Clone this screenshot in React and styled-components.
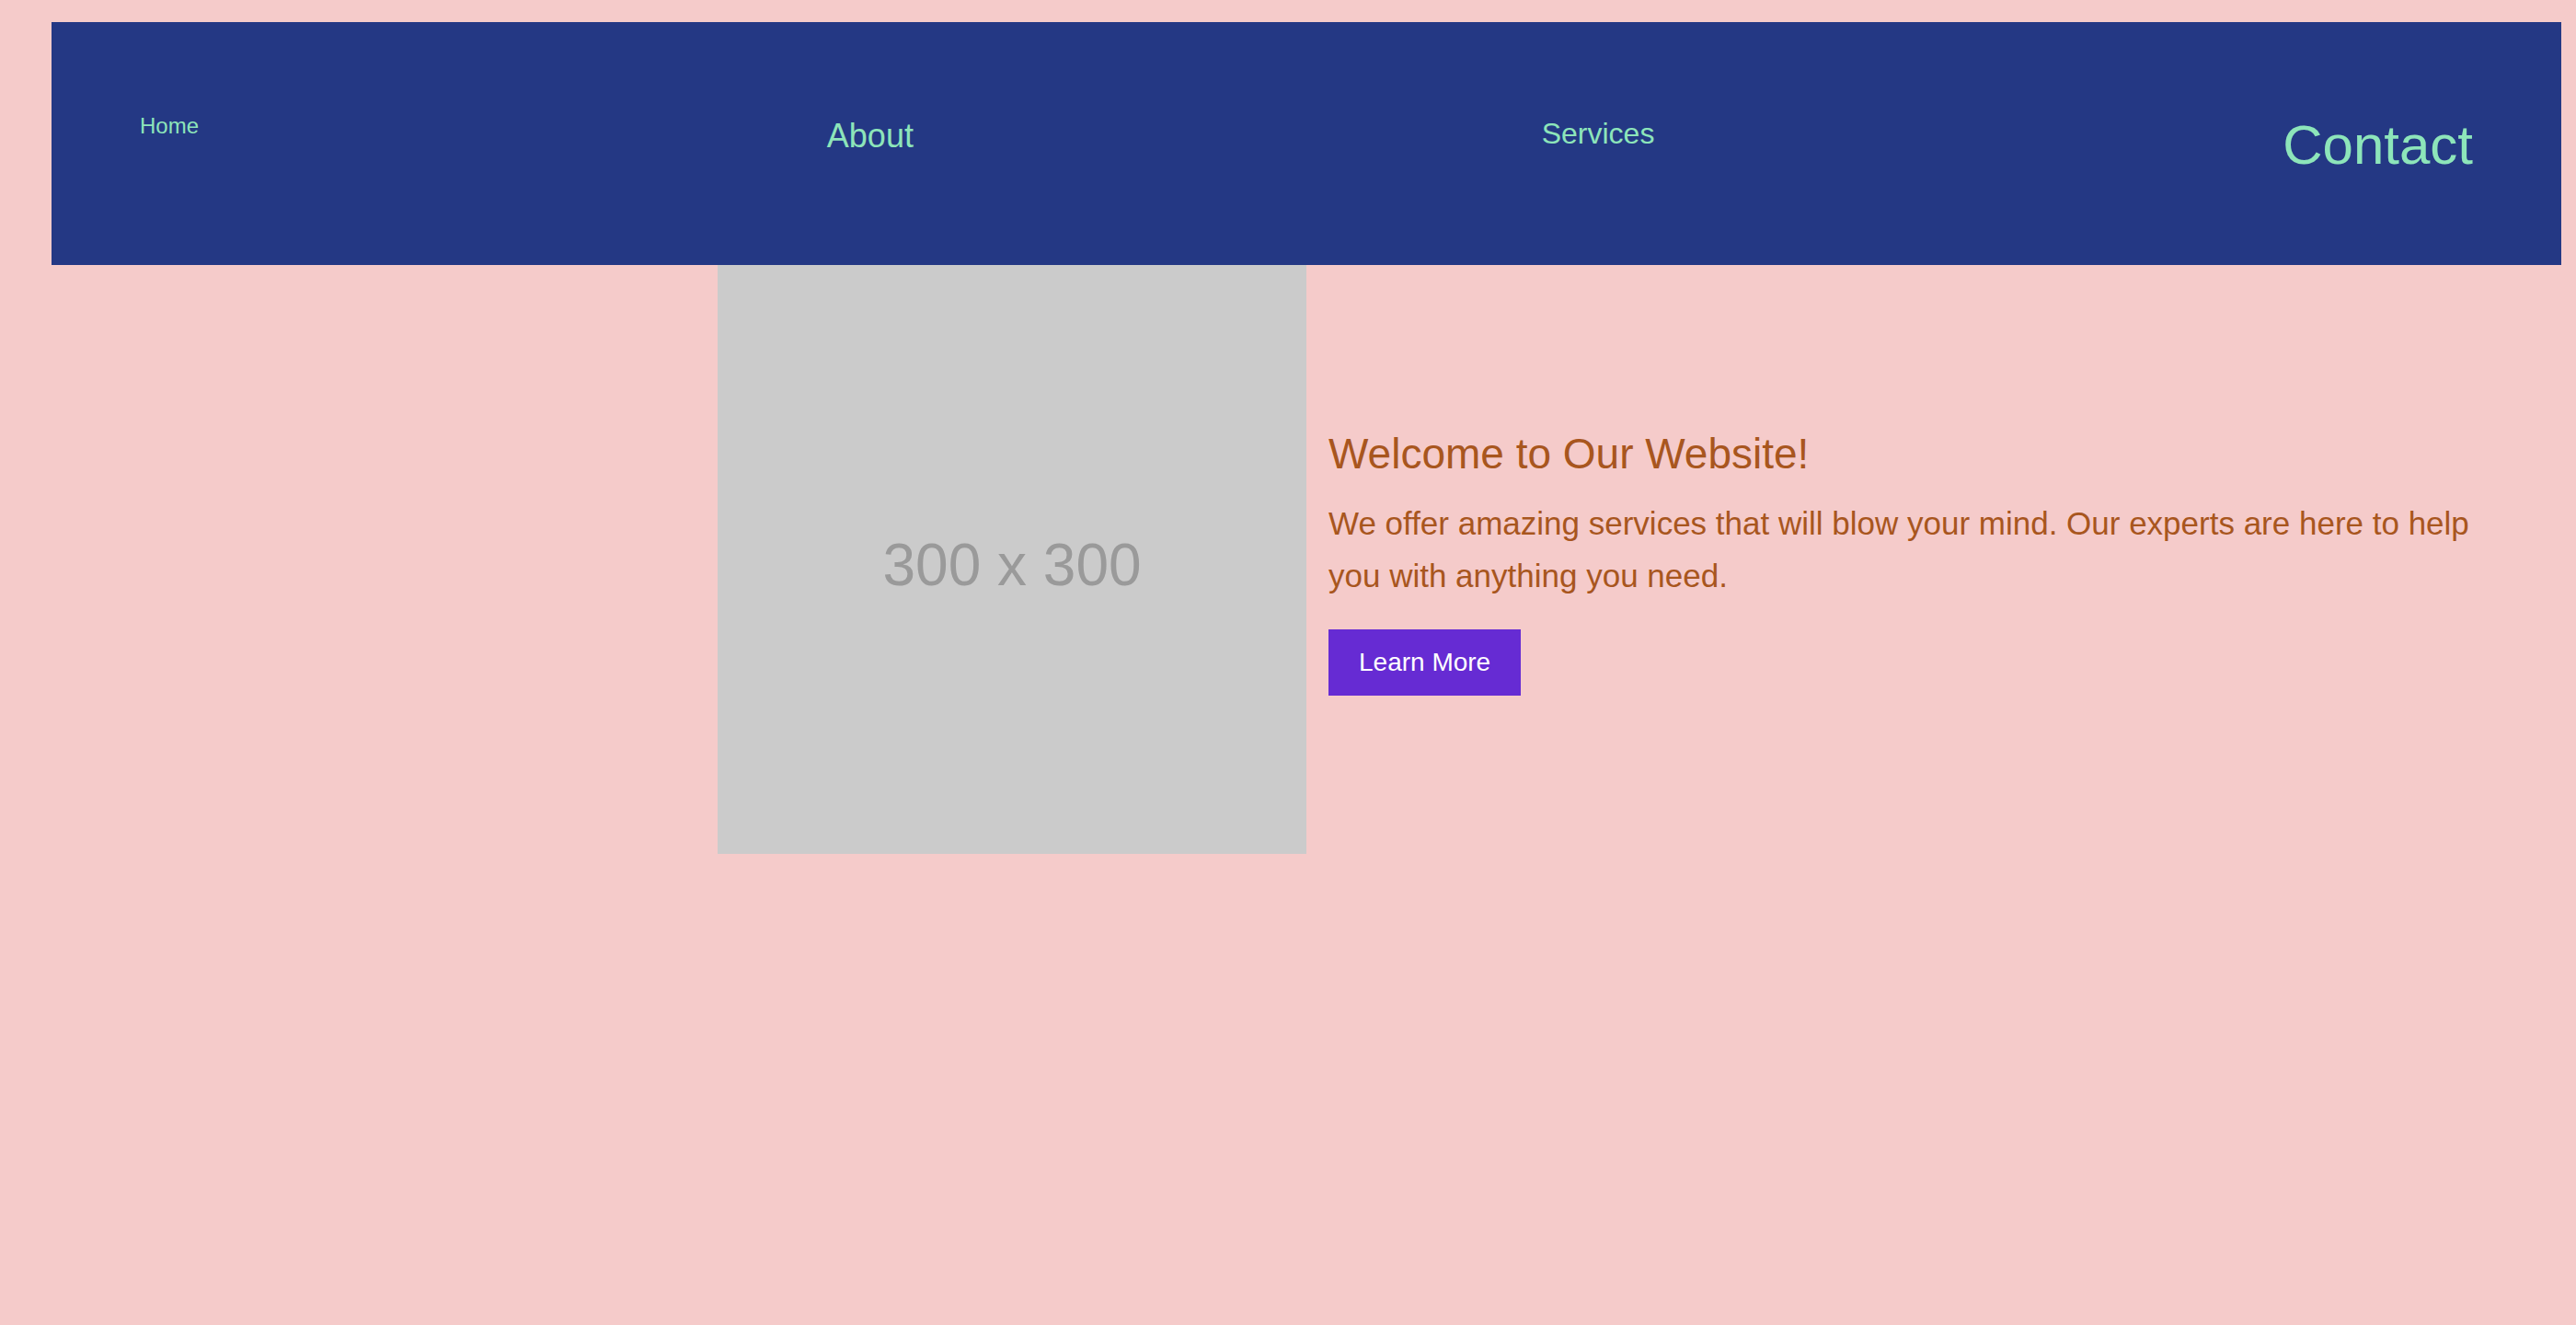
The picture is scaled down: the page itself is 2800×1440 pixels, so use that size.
import React from 'react';
import styled, { createGlobalStyle } from 'styled-components';

const GlobalStyle = createGlobalStyle`
    body {
        margin: 8px;
        background: #f5cbca;
        font-family: "Liberation Sans", Arial, sans-serif;
    }
`;

const NavBar = styled.nav`
    display: flex;
    flex-direction: row;
    justify-content: space-between;
    align-items: flex-start;

    height: 264px;
    margin: 16px 8px 0 48px;
    padding: 0 96px;
    box-sizing: border-box;

    background: #243884;
`;

const NavLink = styled.a`
    margin-top: ${(p) => p.offset}px;

    font-size: ${(p) => p.size}px;
    line-height: 1;
    color: #8de5ba;
    text-decoration: none;
    cursor: pointer;
`;

const Hero = styled.section`
    display: flex;
    flex-direction: row;
    align-items: center;
    gap: 24px;

    padding: 0 40px 0 772px;
`;

const Placeholder = styled.div`
    display: flex;
    align-items: center;
    justify-content: center;
    flex-shrink: 0;

    width: 640px;
    height: 640px;
    padding-top: 12px;
    box-sizing: border-box;

    background: #cbcbcb;
    color: #9a9a9a;
    font-size: 64px;
`;

const HeroText = styled.div`
    display: flex;
    flex-direction: column;
    align-items: flex-start;
    max-width: 1290px;
    padding-top: 6px;
`;

const Title = styled.h1`
    margin: 0 0 18px 0;

    font-size: 46px;
    font-weight: 400;
    line-height: 1.2;
    color: #a8561e;
`;

const Lead = styled.p`
    margin: 0 0 30px 0;

    font-size: 35px;
    line-height: 57px;
    color: #a8561e;
`;

const Button = styled.button`
    padding: 20px 33px;
    border: none;

    background: #662bd3;
    color: #ffffff;
    font-family: inherit;
    font-size: 28px;
    line-height: 32px;
    cursor: pointer;
`;

const LINKS = [
    { label: 'Home', size: 24, offset: 101 },
    { label: 'About', size: 36, offset: 106 },
    { label: 'Services', size: 32, offset: 105 },
    { label: 'Contact', size: 60, offset: 104 },
];

const App = () => {
  return (
    <>
        <GlobalStyle />
        <NavBar>
            {LINKS.map((link) => (
                <NavLink key={link.label} size={link.size} offset={link.offset}>
                    {link.label}
                </NavLink>
            ))}
        </NavBar>
        <Hero>
            <Placeholder>300 x 300</Placeholder>
            <HeroText>
                <Title>Welcome to Our Website!</Title>
                <Lead>
                    We offer amazing services that will blow your mind. Our experts are here to help you with anything you need.
                </Lead>
                <Button>Learn More</Button>
            </HeroText>
        </Hero>
    </>
  )
}

export default App
